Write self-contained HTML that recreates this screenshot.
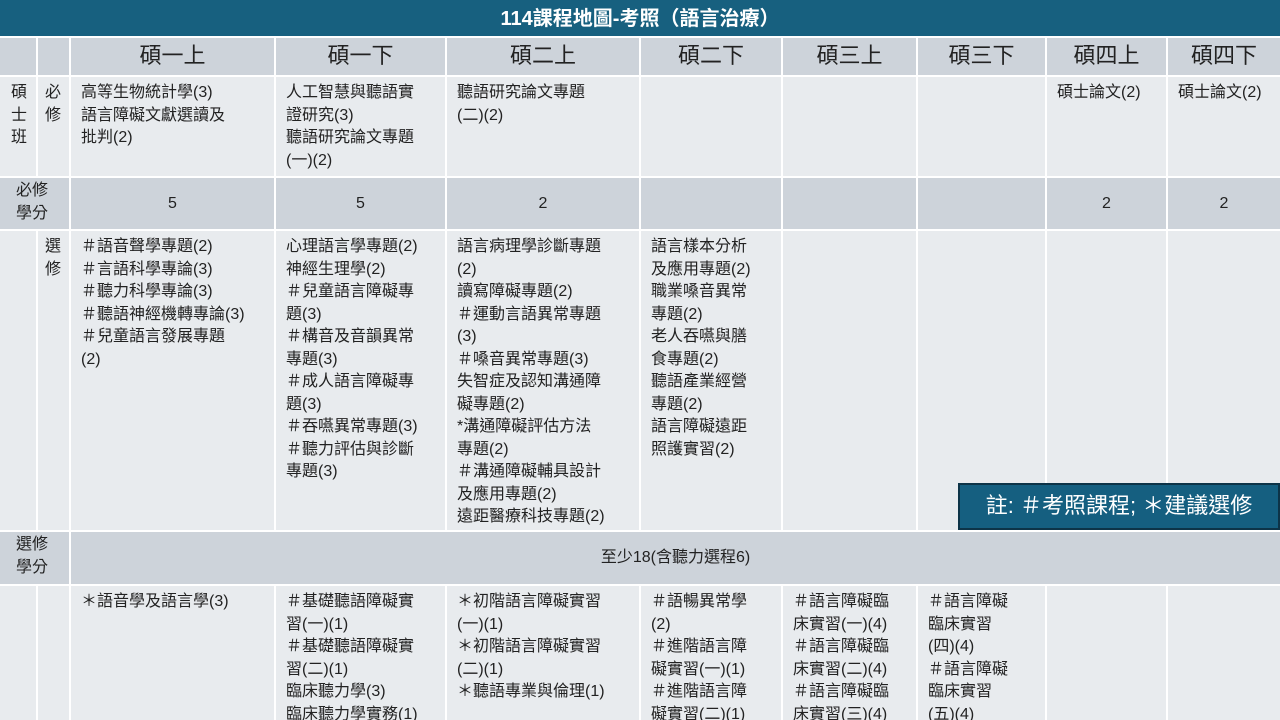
<!DOCTYPE html>
<html><head><meta charset="utf-8"><style>
body{margin:0;width:1280px;height:720px;overflow:hidden;background:#fff;font-family:"Liberation Sans","Noto Sans CJK TC",sans-serif;color:#222}
.c{position:absolute;box-sizing:border-box;background:#e8ebee;font-size:16px;line-height:22.5px;padding:5px 0 0 10px;overflow:hidden;white-space:pre}
.h{background:#cdd3da}
.hd{font-size:22px;text-align:center;padding:4px 0 0 0;line-height:28px}
.ctr{text-align:center;padding:15px 0 0 0}
#t{position:absolute;left:0;top:0;width:1280px;height:36px;background:#17607f;color:#fff;font-weight:bold;font-size:20px;text-align:center;line-height:38px}
#n{position:absolute;left:958px;top:483px;width:322px;height:47px;background:#155f80;border:2px solid #0d3448;box-sizing:border-box;color:#fff;font-size:22px;text-align:center;line-height:42px}
</style></head><body>
<div id="t">114課程地圖-考照（語言治療）</div>
<!-- header row y38-76 -->
<div class="c h" style="left:0;top:38px;width:36px;height:37px"></div>
<div class="c h" style="left:38px;top:38px;width:31px;height:37px"></div>
<div class="c h hd" style="left:71px;top:38px;width:203px;height:37px">碩一上</div>
<div class="c h hd" style="left:276px;top:38px;width:169px;height:37px">碩一下</div>
<div class="c h hd" style="left:447px;top:38px;width:192px;height:37px">碩二上</div>
<div class="c h hd" style="left:641px;top:38px;width:140px;height:37px">碩二下</div>
<div class="c h hd" style="left:783px;top:38px;width:133px;height:37px">碩三上</div>
<div class="c h hd" style="left:918px;top:38px;width:127px;height:37px">碩三下</div>
<div class="c h hd" style="left:1047px;top:38px;width:119px;height:37px">碩四上</div>
<div class="c h hd" style="left:1168px;top:38px;width:112px;height:37px">碩四下</div>
<!-- row1 77-176 -->
<div class="c" style="left:0;top:77px;width:36px;height:99px;padding-left:11px;white-space:normal;width:36px">碩<br>士<br>班</div>
<div class="c" style="left:38px;top:77px;width:31px;height:99px;padding-left:7px">必
修</div>
<div class="c" style="left:71px;top:77px;width:203px;height:99px">高等生物統計學(3)
語言障礙文獻選讀及
批判(2)</div>
<div class="c" style="left:276px;top:77px;width:169px;height:99px">人工智慧與聽語實
證研究(3)
聽語研究論文專題
(一)(2)</div>
<div class="c" style="left:447px;top:77px;width:192px;height:99px">聽語研究論文專題
(二)(2)</div>
<div class="c" style="left:641px;top:77px;width:140px;height:99px"></div>
<div class="c" style="left:783px;top:77px;width:133px;height:99px"></div>
<div class="c" style="left:918px;top:77px;width:127px;height:99px"></div>
<div class="c" style="left:1047px;top:77px;width:119px;height:99px">碩士論文(2)</div>
<div class="c" style="left:1168px;top:77px;width:112px;height:99px">碩士論文(2)</div>
<!-- row2 178-229 -->
<div class="c h" style="left:0;top:178px;width:69px;height:51px;padding:2px 0 0 16px">必修
學分</div>
<div class="c h ctr" style="left:71px;top:178px;width:203px;height:51px">5</div>
<div class="c h ctr" style="left:276px;top:178px;width:169px;height:51px">5</div>
<div class="c h ctr" style="left:447px;top:178px;width:192px;height:51px">2</div>
<div class="c h" style="left:641px;top:178px;width:140px;height:51px"></div>
<div class="c h" style="left:783px;top:178px;width:133px;height:51px"></div>
<div class="c h" style="left:918px;top:178px;width:127px;height:51px"></div>
<div class="c h ctr" style="left:1047px;top:178px;width:119px;height:51px">2</div>
<div class="c h ctr" style="left:1168px;top:178px;width:112px;height:51px">2</div>
<!-- row3 231-530 -->
<div class="c" style="left:0;top:231px;width:36px;height:299px"></div>
<div class="c" style="left:38px;top:231px;width:31px;height:299px;padding-left:7px">選
修</div>
<div class="c" style="left:71px;top:231px;width:203px;height:299px">＃語音聲學專題(2)
＃言語科學專論(3)
＃聽力科學專論(3)
＃聽語神經機轉專論(3)
＃兒童語言發展專題
(2)</div>
<div class="c" style="left:276px;top:231px;width:169px;height:299px">心理語言學專題(2)
神經生理學(2)
＃兒童語言障礙專
題(3)
＃構音及音韻異常
專題(3)
＃成人語言障礙專
題(3)
＃吞嚥異常專題(3)
＃聽力評估與診斷
專題(3)</div>
<div class="c" style="left:447px;top:231px;width:192px;height:299px">語言病理學診斷專題
(2)
讀寫障礙專題(2)
＃運動言語異常專題
(3)
＃嗓音異常專題(3)
失智症及認知溝通障
礙專題(2)
*溝通障礙評估方法
專題(2)
＃溝通障礙輔具設計
及應用專題(2)
遠距醫療科技專題(2)</div>
<div class="c" style="left:641px;top:231px;width:140px;height:299px">語言樣本分析
及應用專題(2)
職業嗓音異常
專題(2)
老人吞嚥與膳
食專題(2)
聽語產業經營
專題(2)
語言障礙遠距
照護實習(2)</div>
<div class="c" style="left:783px;top:231px;width:133px;height:299px"></div>
<div class="c" style="left:918px;top:231px;width:127px;height:299px"></div>
<div class="c" style="left:1047px;top:231px;width:119px;height:299px"></div>
<div class="c" style="left:1168px;top:231px;width:112px;height:299px"></div>
<!-- row4 532-584 -->
<div class="c h" style="left:0;top:532px;width:69px;height:52px;padding:2px 0 0 16px">選修
學分</div>
<div class="c h ctr" style="left:71px;top:532px;width:1209px;height:52px">至少18(含聽力選程6)</div>
<!-- row5 586-720 -->
<div class="c" style="left:0;top:586px;width:36px;height:134px"></div>
<div class="c" style="left:38px;top:586px;width:31px;height:134px"></div>
<div class="c" style="left:71px;top:586px;width:203px;height:134px">＊語音學及語言學(3)</div>
<div class="c" style="left:276px;top:586px;width:169px;height:134px">＃基礎聽語障礙實
習(一)(1)
＃基礎聽語障礙實
習(二)(1)
臨床聽力學(3)
臨床聽力學實務(1)</div>
<div class="c" style="left:447px;top:586px;width:192px;height:134px">＊初階語言障礙實習
(一)(1)
＊初階語言障礙實習
(二)(1)
＊聽語專業與倫理(1)</div>
<div class="c" style="left:641px;top:586px;width:140px;height:134px">＃語暢異常學
(2)
＃進階語言障
礙實習(一)(1)
＃進階語言障
礙實習(二)(1)</div>
<div class="c" style="left:783px;top:586px;width:133px;height:134px">＃語言障礙臨
床實習(一)(4)
＃語言障礙臨
床實習(二)(4)
＃語言障礙臨
床實習(三)(4)</div>
<div class="c" style="left:918px;top:586px;width:127px;height:134px">＃語言障礙
臨床實習
(四)(4)
＃語言障礙
臨床實習
(五)(4)</div>
<div class="c" style="left:1047px;top:586px;width:119px;height:134px"></div>
<div class="c" style="left:1168px;top:586px;width:112px;height:134px"></div>
<div id="n">註: ＃考照課程; ＊建議選修</div>
</body></html>
